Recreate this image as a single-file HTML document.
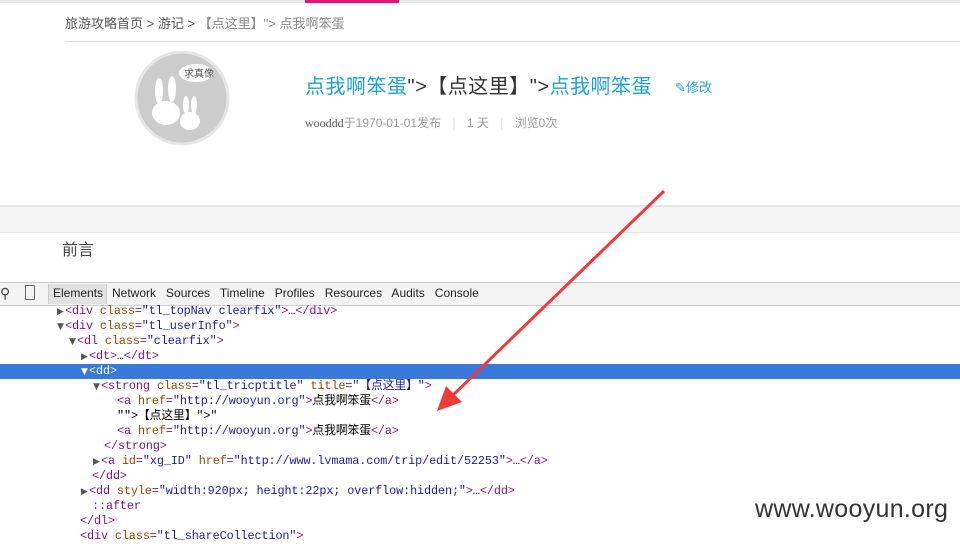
<!DOCTYPE html>
<html><head><meta charset="utf-8"><style>
body{margin:0;width:960px;height:538px;overflow:hidden;background:#fff;font-family:"Liberation Sans","Noto Sans CJK SC",sans-serif;position:relative}
.a{position:absolute;white-space:nowrap}
.code{font-family:"Liberation Mono","Noto Sans CJK SC",monospace;font-size:11.8px;letter-spacing:-0.1px;line-height:15px}
.code div{height:15px}
.t{color:#881280}.at{color:#994500}.v{color:#1a1aa6}
.tri{display:inline-block;width:8px;color:#555;font-size:9px;font-family:"DejaVu Sans",sans-serif}
</style></head><body>
<div class="a" style="left:0;top:0;width:960px;height:3px;background:#e8e8e8"></div>
<div class="a" style="left:305px;top:0;width:94px;height:3px;background:#e4127a"></div>
<div class="a" style="left:65px;top:13px;font-size:13px;color:#555">旅游攻略首页 &gt; 游记 &gt; <span style="color:#888">【点这里】"&gt; 点我啊笨蛋</span></div>
<div class="a" style="left:65px;top:41px;width:895px;height:1px;background:#ddd"></div>
<svg class="a" style="left:134px;top:51px" width="96" height="96"><circle cx="48" cy="47" r="46" fill="#ccc" stroke="#e6e6e6" stroke-width="3"/><ellipse cx="62" cy="22" rx="17" ry="9" fill="#fff"/><text x="50" y="26" font-size="10" fill="#555" font-family="Noto Sans CJK SC">求真像</text><ellipse cx="32" cy="62" rx="14" ry="12" fill="#fff"/><ellipse cx="25" cy="40" rx="4" ry="13" fill="#fff"/><ellipse cx="38" cy="38" rx="4" ry="13" fill="#fff"/><ellipse cx="56" cy="70" rx="10" ry="9" fill="#fff"/><ellipse cx="52" cy="54" rx="3" ry="9" fill="#fff"/><ellipse cx="60" cy="54" rx="3" ry="9" fill="#fff"/></svg>
<div class="a" style="left:305px;top:70px;font-size:20px;color:#333;letter-spacing:0.5px"><span style="color:#1ea2d6">点我啊笨蛋</span>"&gt;【点这里】"&gt;<span style="color:#1ea2d6">点我啊笨蛋</span></div>
<div class="a" style="left:675px;top:77px;font-size:13px;color:#1ea2d6">✎修改</div>
<div class="a" style="left:305px;top:114px;font-size:12px;color:#999"><span style="color:#555;font-family:'Liberation Serif'">wooddd</span>于1970-01-01发布 <span style="color:#ddd;margin:0 8px">|</span> 1 天 <span style="color:#ddd;margin:0 8px">|</span> 浏览0次</div>
<div class="a" style="left:0;top:205px;width:960px;height:2px;background:#e6e6e6"></div>
<div class="a" style="left:0;top:207px;width:960px;height:25px;background:#f5f5f5"></div>
<div class="a" style="left:0;top:232px;width:960px;height:1px;background:#e6e6e6"></div>
<div class="a" style="left:62px;top:236px;font-size:16px;color:#444">前言</div>
<div class="a" style="left:0;top:282px;width:960px;height:22px;background:#f3f3f3;border-top:1px solid #ccc;border-bottom:1px solid #ccc"></div>
<div class="a" style="left:0;top:285px;font-size:14px;color:#444">⚲</div>
<div class="a" style="left:25px;top:285px;width:8px;height:13px;border:1px solid #666;border-radius:1px"></div>
<div class="a" style="left:48px;top:284px;width:57px;height:20px;background:#e2e2e2;border-left:1px solid #ccc;border-right:1px solid #ccc"></div>
<div class="a" style="left:53px;top:286px;font-size:12px;color:#222">Elements</div>
<div class="a" style="left:112px;top:286px;font-size:12px;color:#222">Network&nbsp;&nbsp; Sources&nbsp;&nbsp; Timeline&nbsp;&nbsp; Profiles&nbsp;&nbsp; Resources&nbsp;&nbsp; Audits&nbsp;&nbsp; Console</div>
<div class="a" style="left:0;top:364px;width:960px;height:15px;background:#3879d9"></div>
<div class="a code" style="left:57px;top:304px">
<div><span class="tri">▶</span><span class="t">&lt;div </span><span class="at">class</span><span class="t">=</span><span class="v">"tl_topNav clearfix"</span><span class="t">&gt;</span>…<span class="t">&lt;/div&gt;</span></div>
<div><span class="tri">▼</span><span class="t">&lt;div </span><span class="at">class</span><span class="t">=</span><span class="v">"tl_userInfo"</span><span class="t">&gt;</span></div>
<div style="padding-left:12px"><span class="tri">▼</span><span class="t">&lt;dl </span><span class="at">class</span><span class="t">=</span><span class="v">"clearfix"</span><span class="t">&gt;</span></div>
<div style="padding-left:24px"><span class="tri">▶</span><span class="t">&lt;dt&gt;</span>…<span class="t">&lt;/dt&gt;</span></div>
<div style="padding-left:24px;color:#fff"><span class="tri" style="color:#fff">▼</span>&lt;dd&gt;</div>
<div style="padding-left:36px"><span class="tri">▼</span><span class="t">&lt;strong </span><span class="at">class</span><span class="t">=</span><span class="v">"tl_tricptitle"</span> <span class="at">title</span><span class="t">=</span><span class="v">"【点这里】"</span><span class="t">&gt;</span></div>
<div style="padding-left:60px"><span class="t">&lt;a </span><span class="at">href</span><span class="t">=</span><span class="v">"http://wooyun.org"</span><span class="t">&gt;</span>点我啊笨蛋<span class="t">&lt;/a&gt;</span></div>
<div style="padding-left:60px">""&gt;【点这里】"&gt;"</div>
<div style="padding-left:60px"><span class="t">&lt;a </span><span class="at">href</span><span class="t">=</span><span class="v">"http://wooyun.org"</span><span class="t">&gt;</span>点我啊笨蛋<span class="t">&lt;/a&gt;</span></div>
<div style="padding-left:47px"><span class="t">&lt;/strong&gt;</span></div>
<div style="padding-left:36px"><span class="tri">▶</span><span class="t">&lt;a </span><span class="at">id</span><span class="t">=</span><span class="v">"xg_ID"</span> <span class="at">href</span><span class="t">=</span><span class="v">"http://www.lvmama.com/trip/edit/52253"</span><span class="t">&gt;</span>…<span class="t">&lt;/a&gt;</span></div>
<div style="padding-left:35px"><span class="t">&lt;/dd&gt;</span></div>
<div style="padding-left:24px"><span class="tri">▶</span><span class="t">&lt;dd </span><span class="at">style</span><span class="t">=</span><span class="v">"width:920px; height:22px; overflow:hidden;"</span><span class="t">&gt;</span>…<span class="t">&lt;/dd&gt;</span></div>
<div style="padding-left:35px"><span class="t">::after</span></div>
<div style="padding-left:23px"><span class="t">&lt;/dl&gt;</span></div>
<div style="padding-left:23px"><span class="t">&lt;div </span><span class="at">class</span><span class="t">=</span><span class="v">"tl_shareCollection"</span><span class="t">&gt;</span></div>
</div>
<svg class="a" style="left:0;top:0" width="960" height="538"><line x1="664" y1="191" x2="450" y2="398" stroke="#f03a3a" stroke-width="3"/><polygon points="437,411 446,386 462,402" fill="#f03a3a"/></svg>
<div class="a" style="left:755px;top:495px;font-size:25px;color:#333;letter-spacing:0.3px">www.wooyun.org</div>
</body></html>
